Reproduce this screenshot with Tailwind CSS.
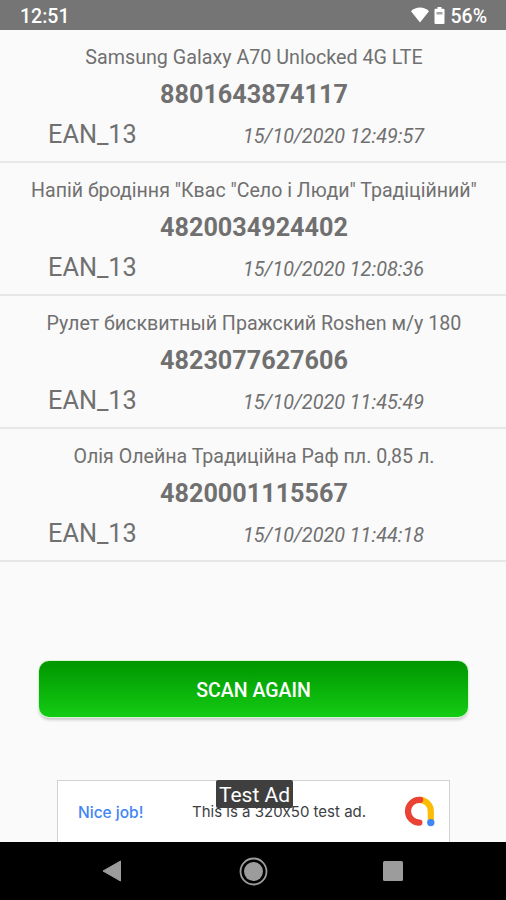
<!DOCTYPE html>
<html lang="uk">
<head>
    <meta charset="UTF-8" />
    <meta name="viewport" content="width=device-width, initial-scale=1.0">
    <title>Scan history</title>
    <script src="https://cdn.jsdelivr.net/npm/@tailwindcss/browser@4"></script>
</head>
<body class="bg-black font-['Roboto',sans-serif]">

<div class="w-[506px] h-[900px] mx-auto flex flex-col overflow-hidden bg-[#fafafa] text-[#707070]">

    <!-- Status bar -->
    <header class="h-[30px] shrink-0 flex items-center justify-between bg-[#757575] pl-5 pr-[19px] pt-[3px] text-white">
        <span class="text-[19.500px] leading-none font-medium">12:51</span>
        <div class="flex items-center">
            <svg class="w-[18px] h-[16px] -mt-[3px]" viewBox="0 0 18 16" fill="#fff">
                <path d="M9 15.500 0 4.200C2.400 1.900 5.600.6 9 .6s6.600 1.300 9 3.600z"/>
            </svg>
            <svg class="w-[11px] h-[17px] ml-[5px] -mt-[3px]" viewBox="0 0 11 17">
                <path d="M3.500 0h4v1.700H9.500a1 1 0 0 1 1 1V16a1 1 0 0 1-1 1h-8a1 1 0 0 1-1-1V2.700a1 1 0 0 1 1-1h2z" fill="#fff"/>
                <path d="M2.500 5h6v2.500h-6z" fill="#a5a5a5"/>
            </svg>
            <span class="ml-[5px] text-[19.500px] leading-none font-medium">56%</span>
        </div>
    </header>

    <!-- Scanned items -->
    <ul class="shrink-0">
        <li class="h-[133px] border-b-2 border-[#e7e7e7] pt-4 text-center">
            <p class="pl-0.5 text-[19.700px] leading-6 whitespace-nowrap">Samsung Galaxy A70 Unlocked 4G LTE</p>
            <p class="mt-[10px] pl-0.5 text-[25.200px] leading-[30px] font-bold">8801643874117</p>
            <div class="mt-[10px] flex items-center justify-between pl-12 pr-[82px]">
                <span class="text-[25.300px] leading-[30px]">EAN_13</span>
                <span class="mt-[3px] text-[19.800px] leading-6 italic">15/10/2020 12:49:57</span>
            </div>
        </li>
        <li class="h-[133px] border-b-2 border-[#e7e7e7] pt-4 text-center">
            <p class="pl-0.5 text-[19.570px] leading-6 whitespace-nowrap">Напій бродіння "Квас "Село і Люди" Традіційний"</p>
            <p class="mt-[10px] pl-0.5 text-[25.200px] leading-[30px] font-bold">4820034924402</p>
            <div class="mt-[10px] flex items-center justify-between pl-12 pr-[82px]">
                <span class="text-[25.300px] leading-[30px]">EAN_13</span>
                <span class="mt-[3px] text-[19.800px] leading-6 italic">15/10/2020 12:08:36</span>
            </div>
        </li>
        <li class="h-[133px] border-b-2 border-[#e7e7e7] pt-4 text-center">
            <p class="pl-0.5 text-[19.660px] leading-6 whitespace-nowrap">Рулет бисквитный Пражский Roshen м/у 180</p>
            <p class="mt-[10px] pl-0.5 text-[25.200px] leading-[30px] font-bold">4823077627606</p>
            <div class="mt-[10px] flex items-center justify-between pl-12 pr-[82px]">
                <span class="text-[25.300px] leading-[30px]">EAN_13</span>
                <span class="mt-[3px] text-[19.800px] leading-6 italic">15/10/2020 11:45:49</span>
            </div>
        </li>
        <li class="h-[133px] border-b-2 border-[#e7e7e7] pt-4 text-center">
            <p class="pl-0.5 text-[19.600px] leading-6 whitespace-nowrap">Олія Олейна Традиційна Раф пл. 0,85 л.</p>
            <p class="mt-[10px] pl-0.5 text-[25.200px] leading-[30px] font-bold">4820001115567</p>
            <div class="mt-[10px] flex items-center justify-between pl-12 pr-[82px]">
                <span class="text-[25.300px] leading-[30px]">EAN_13</span>
                <span class="mt-[3px] text-[19.800px] leading-6 italic">15/10/2020 11:44:18</span>
            </div>
        </li>
    </ul>

    <button class="mt-[99px] ml-[39px] w-[429px] h-[56px] shrink-0 rounded-[10px] bg-linear-to-b from-[#009600] to-[#14cc14] pt-[3px] text-[19.500px] font-medium text-white shadow-[0_0_0_1px_#d5f5d5,0_3px_3px_rgba(0,0,0,0.2)]">SCAN AGAIN</button>

    <!-- Ad banner -->
    <div class="relative mt-auto ml-[57px] w-[393px] h-[62px] shrink-0 flex items-center border border-b-0 border-[#d0d4d3] bg-white pl-5 pr-3.5 font-['Inter',sans-serif] [font-feature-settings:'calt'_0]">
        <span class="w-[66px] pt-0.5 text-[15.500px] font-medium text-[#4285f4] whitespace-nowrap">Nice job!</span>
        <span class="ml-12 pt-0.5 text-[15px] text-[#3c4043] whitespace-nowrap">This is a 320x50 test ad.</span>
        <svg class="ml-auto w-[31px] h-[31px]" viewBox="0 0 31 31" fill="none" stroke-width="6.200" stroke-linecap="round">
            <path d="M15.700 3.800A11.400 11.400 0 0 1 26.800 15v11" stroke="#fbbc04"/>
            <path d="M16.200 3.800h-.8a11.400 11.400 0 0 0 0 22.800" stroke="#ea4335"/>
            <circle cx="26.800" cy="26.600" r="3.700" fill="#4285f4"/>
        </svg>
        <span class="absolute left-[158px] top-[-1px] w-[77px] h-[28px] rounded-[2px] bg-[#3f3f3f] text-center font-['Roboto',sans-serif] text-[21px] leading-[31px] text-white">Test Ad</span>
    </div>

    <!-- Navigation bar -->
    <nav class="h-[58px] shrink-0 flex items-center bg-black pl-[102px]">
        <svg class="w-[20px] h-[22px]" viewBox="0 0 20 22">
            <path d="M1 11 18.500 1v20z" fill="#9c9c9c" stroke="#9c9c9c" stroke-linejoin="round"/>
        </svg>
        <svg class="ml-[117px] w-[29px] h-[29px]" viewBox="0 0 29 29">
            <circle cx="14.500" cy="14.500" r="13" fill="none" stroke="#9c9c9c" stroke-width="1.800"/>
            <circle cx="14.500" cy="14.500" r="9.500" fill="#9c9c9c"/>
        </svg>
        <span class="ml-[115px] size-5 rounded-[1.500px] bg-[#9c9c9c]"></span>
    </nav>
</div>

</body>
</html>
